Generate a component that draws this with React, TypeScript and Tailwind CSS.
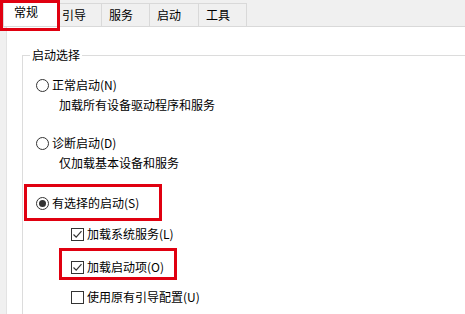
import React from "react";

const font = { fontFamily: '"Noto Sans CJK SC", "Noto Sans", sans-serif' };

function Radio({ checked }: { checked?: boolean }) {
  return (
    <span className="flex h-[13px] w-[13px] shrink-0 items-center justify-center rounded-full border border-[#333333] bg-white">
      {checked && <span className="h-[7px] w-[7px] rounded-full bg-[#333333]" />}
    </span>
  );
}

function Check({ checked }: { checked?: boolean }) {
  return (
    <span className="flex h-[13px] w-[13px] shrink-0 items-center justify-center border border-[#333333] bg-white">
      {checked && (
        <svg width="11" height="11" viewBox="0 0 11 11">
          <path d="M1.5 5.5 L4.2 8.2 L9.5 2.2" fill="none" stroke="#333333" strokeWidth="1.2" />
        </svg>
      )}
    </span>
  );
}

export default function App() {
  return (
    <div className="relative h-[314px] w-[465px] overflow-hidden bg-white text-[12px] leading-none text-[#000000]" style={font}>
      {/* tab bar */}
      <div className="flex h-[27px] items-end border-b border-[#d9d9d9] bg-[#f0f0f0] pl-[3px]">
        <div className="flex h-[26px] w-[55px] items-center border border-b-0 border-[#d9d9d9] bg-white pb-[3px] pl-[10px]">常规</div>
        <div className="flex h-[23px] w-[44px] items-center border-r border-t border-[#d9d9d9] bg-[#f0f0f0] pl-[4px]">引导</div>
        <div className="flex h-[23px] w-[48px] items-center border-r border-t border-[#d9d9d9] bg-[#f0f0f0] pl-[7px]">服务</div>
        <div className="flex h-[23px] w-[49px] items-center border-r border-t border-[#d9d9d9] bg-[#f0f0f0] pl-[7px]">启动</div>
        <div className="flex h-[23px] w-[48px] items-center border-r border-t border-[#d9d9d9] bg-[#f0f0f0] pl-[7px]">工具</div>
      </div>
      {/* body */}
      <div className="flex h-[287px]">
        <div className="w-[7px] shrink-0 border-r border-[#e3e3e3] bg-[#f0f0f0]" />
        <div className="flex-1 pl-[15px] pt-[28px]">
          <div className="relative h-[300px] border-l border-t border-[#dcdcdc] pt-[19px]">
            <span className="absolute left-[7px] top-[-8px] bg-white px-[2px] leading-[14px]">启动选择</span>
            <div className="flex h-[20px] items-center gap-[3px] pl-[13px]">
              <Radio />
              <span>正常启动(N)</span>
            </div>
            <div className="flex h-[20px] items-center pl-[36px]">加载所有设备驱动程序和服务</div>
            <div className="mt-[18px] flex h-[20px] items-center gap-[3px] pl-[13px]">
              <Radio />
              <span>诊断启动(D)</span>
            </div>
            <div className="flex h-[20px] items-center pl-[36px]">仅加载基本设备和服务</div>
            <div className="mt-[20px] flex h-[20px] items-center gap-[3px] pl-[13px]">
              <Radio checked />
              <span>有选择的启动(S)</span>
            </div>
            <div className="mt-[11px] flex h-[20px] items-center gap-[3px] pl-[48px]">
              <Check checked />
              <span>加载系统服务(L)</span>
            </div>
            <div className="mt-[13px] flex h-[20px] items-center gap-[3px] pl-[48px]">
              <Check checked />
              <span>加载启动项(O)</span>
            </div>
            <div className="mt-[10px] flex h-[20px] items-center gap-[3px] pl-[48px]">
              <Check />
              <span>使用原有引导配置(U)</span>
            </div>
          </div>
        </div>
      </div>
      {/* red highlight boxes */}
      <div className="absolute left-0 top-0 h-[31px] w-[60px] border-[3px] border-[#e00010]" />
      <div className="absolute left-[24px] top-[184px] h-[37px] w-[138px] border-[3px] border-[#e00010]" />
      <div className="absolute left-[59px] top-[248px] h-[32px] w-[118px] border-[3px] border-[#e00010]" />
    </div>
  );
}
